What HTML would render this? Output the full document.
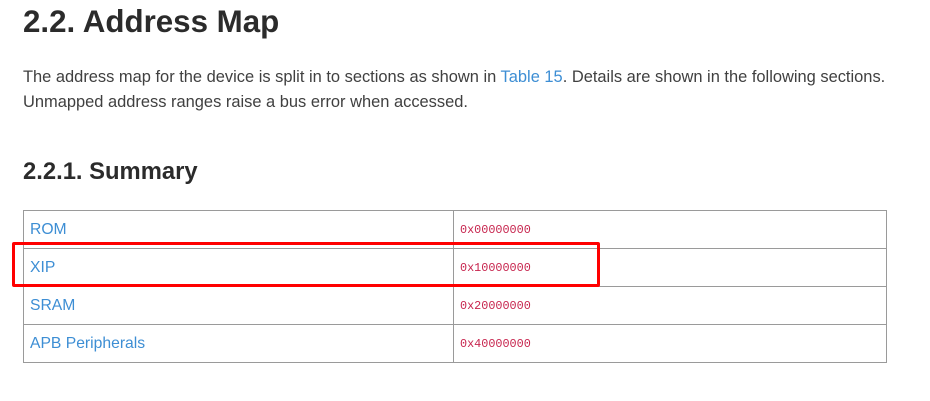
<!DOCTYPE html>
<html><head><style>
body{margin:0;width:930px;height:401px;background:#fff;font-family:"Liberation Sans",sans-serif;color:#333;position:relative;overflow:hidden}
h1{position:absolute;left:23px;top:0px;margin:0;font-size:31.3px;line-height:44px;font-weight:bold;color:#2b2b2b}
h2{position:absolute;left:23px;top:157px;margin:0;font-size:23.8px;line-height:30px;font-weight:bold;color:#2b2b2b}
p{position:absolute;left:23px;top:65px;margin:0;font-size:16.45px;line-height:25px;color:#404040;white-space:nowrap}
a{color:#3d8ed4;text-decoration:none}
table{position:absolute;left:23px;top:210px;width:864px;border-collapse:collapse}
td{border:1px solid #9a9a9a;height:37px;padding:0 6px;font-size:15.7px;color:#3d8ed4;vertical-align:middle}
td.c{font-family:"Liberation Mono",monospace;font-size:11.8px;color:#c7254e;width:420px}
.r{position:absolute;left:12px;top:242px;width:582px;height:39px;border:3px solid #f00;border-radius:2px}
</style></head><body>
<h1>2.2. Address Map</h1>
<p>The address map for the device is split in to sections as shown in <a>Table 15</a>. Details are shown in the following sections.<br>Unmapped address ranges raise a bus error when accessed.</p>
<h2>2.2.1. Summary</h2>
<table>
<tr><td>ROM</td><td class="c">0x00000000</td></tr>
<tr><td>XIP</td><td class="c">0x10000000</td></tr>
<tr><td>SRAM</td><td class="c">0x20000000</td></tr>
<tr><td>APB Peripherals</td><td class="c">0x40000000</td></tr>
</table>
<div class="r"></div>
</body></html>
